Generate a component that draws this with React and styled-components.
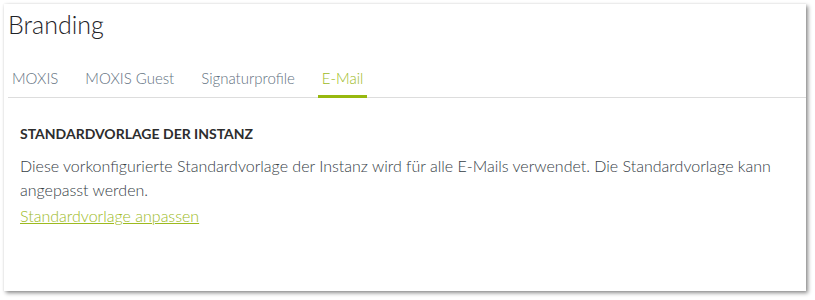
import styled, { createGlobalStyle } from "styled-components";

const GlobalStyle = createGlobalStyle`
  body {
    margin: 0;
    background: #ffffff;
    font-family: Lato, "Open Sans", sans-serif;
  }
`;

const tabs = [
  { name: "MOXIS", key: "moxis" },
  { name: "MOXIS Guest", key: "guest" },
  { name: "Signaturprofile", key: "sig" },
  { name: "E-Mail", key: "mail" },
];

const App = () => {
  const selected = "mail";

  return (
    <Page>
      <GlobalStyle />
      <Panel>
        <Title>Branding</Title>
        <TabBar>
          {tabs.map((tab) => (
            <Tab key={tab.key} isSelected={selected === tab.key}>
              {tab.name}
            </Tab>
          ))}
        </TabBar>
        <Content>
          <SectionHeading>Standardvorlage der Instanz</SectionHeading>
          <Text>
            Diese vorkonfigurierte Standardvorlage der Instanz wird für alle
            E-Mails verwendet. Die Standardvorlage kann angepasst werden.
          </Text>
          <Link href="#">Standardvorlage anpassen</Link>
        </Content>
      </Panel>
    </Page>
  );
};
export default App;

const Page = styled.div`
  padding: 4px 9px 10px 4px;
`;

const Panel = styled.section`
  background: #ffffff;
  height: 287px;
  box-sizing: border-box;
  box-shadow: 2px 2px 4px rgba(0, 0, 0, 0.45), 0 0 2px rgba(0, 0, 0, 0.08);
`;

const Title = styled.h1`
  margin: 0;
  padding: 2px 0 0 4px;
  font-size: 25px;
  font-weight: 300;
  color: #1e2328;
  line-height: 36px;
`;

const TabBar = styled.nav`
  display: flex;
  gap: 19px;
  margin: 18px 0 0 4px;
  border-bottom: 1px solid #dddddd;
`;

const Tab = styled.div`
  padding: 0 4px;
  height: 35px;
  line-height: 36px;
  font-size: 15px;
  font-weight: 300;
  color: ${({ isSelected }) => (isSelected ? "#9dba1e" : "#5f7180")};
  border-bottom: 3px solid ${({ isSelected }) => (isSelected ? "#97b80f" : "transparent")};
  margin-bottom: -1px;
  cursor: pointer;
`;

const Content = styled.div`
  padding: 26px 16px 0 16px;
`;

const SectionHeading = styled.h2`
  margin: 0 0 10px;
  font-size: 14px;
  font-weight: 700;
  text-transform: uppercase;
  color: #2d2d2d;
  line-height: 20px;
`;

const Text = styled.p`
  margin: 0;
  font-size: 16px;
  font-weight: 300;
  line-height: 24px;
  color: #353d45;
`;

const Link = styled.a`
  font-size: 16px;
  font-weight: 300;
  line-height: 28px;
  color: #9dba1e;
  text-decoration: underline;
`;
